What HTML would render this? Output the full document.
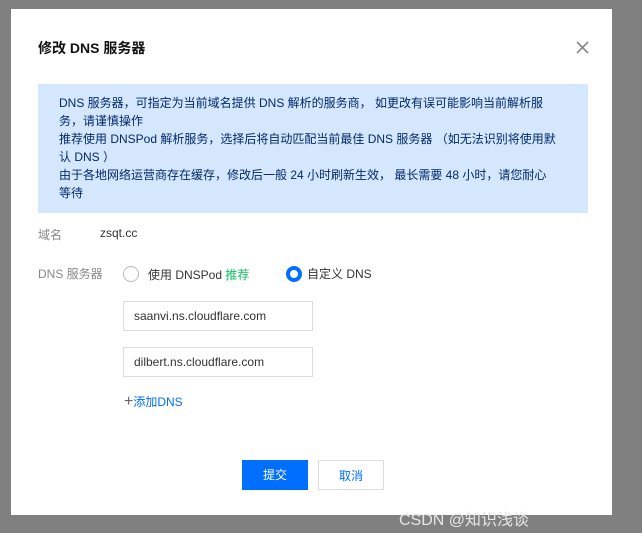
<!DOCTYPE html>
<html><head><meta charset="utf-8"><style>
body{margin:0;width:642px;height:533px;background:#808080;position:relative;overflow:hidden;font-family:"Liberation Sans","Noto Sans CJK SC",sans-serif;font-size:12px;color:#000}
.dlg{position:absolute;left:11px;top:9px;width:601px;height:506px;background:#fff}
.a{position:absolute}
.info{position:absolute;left:27px;top:75px;width:550px;height:129px;background:#d5e7fd;color:#002a6b;line-height:18px;box-sizing:border-box;padding:10px 0 0 21px;white-space:nowrap}
.inp{position:absolute;left:112px;height:28px;border:1px solid #dcdcdc;line-height:28px;padding-left:10px;color:#333;font-size:12px;width:178px}
.btn{position:absolute;top:451px;width:66px;height:30px;line-height:30px;text-align:center;box-sizing:border-box}
</style></head><body>
<div class="dlg">
<div class="a" style="left:27px;top:29px;font-size:14px;font-weight:bold;color:#111">修改 DNS 服务器</div>
<svg class="a" style="left:565px;top:32px" width="13" height="13"><path d="M1 1L12 12M12 1L1 12" stroke="#888" stroke-width="1.6"/></svg>
<div class="info">DNS 服务器，可指定为当前域名提供 DNS 解析的服务商， 如更改有误可能影响当前解析服<br>务，请谨慎操作<br>推荐使用 DNSPod 解析服务，选择后将自动匹配当前最佳 DNS 服务器 （如无法识别将使用默<br>认 DNS ）<br>由于各地网络运营商存在缓存，修改后一般 24 小时刷新生效， 最长需要 48 小时，请您耐心<br>等待</div>
<div class="a" style="left:27px;top:217px;color:#888">域名</div>
<div class="a" style="left:89px;top:217px;color:#333">zsqt.cc</div>
<div class="a" style="left:27px;top:256px;color:#888">DNS 服务器</div>
<div class="a" style="left:112px;top:257px;width:14px;height:14px;border:1px solid #bbb;border-radius:50%"></div>
<div class="a" style="left:137px;top:257px;color:#333">使用 DNSPod <span style="color:#0abf5b">推荐</span></div>
<div class="a" style="left:275px;top:257px;width:8px;height:8px;border:4px solid #006eff;border-radius:50%"></div>
<div class="a" style="left:296px;top:256px;color:#333">自定义 DNS</div>
<div class="inp" style="top:292px">saanvi.ns.cloudflare.com</div>
<div class="inp" style="top:338px">dilbert.ns.cloudflare.com</div>
<div class="a" style="left:113px;top:384px;color:#006eff"><span style="color:#666;font-size:16px">+</span>添加DNS</div>
<div class="btn" style="left:231px;background:#006eff;color:#fff">提交</div>
<div class="btn" style="left:307px;border:1px solid #dcdcdc;color:#006eff">取消</div>
</div>
<div class="a" style="left:399px;top:506px;font-size:16px;color:#e6e6e6">CSDN @知识浅谈</div>
</body></html>
